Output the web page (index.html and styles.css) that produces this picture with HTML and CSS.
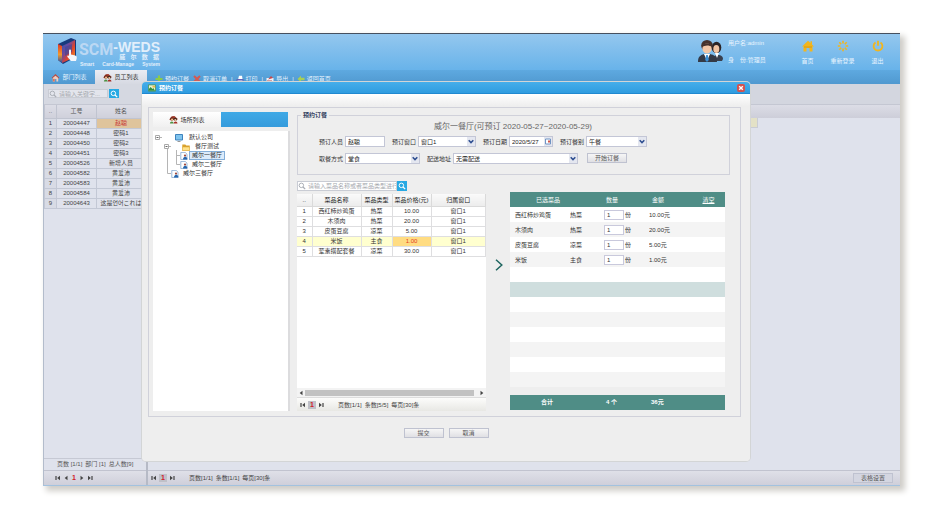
FILE: index.html
```html
<!DOCTYPE html>
<html lang="zh-CN">
<head>
<meta charset="utf-8">
<title>SCM-WEDS</title>
<link rel="stylesheet" href="styles.css">
</head>
<body>
<svg class="defs" aria-hidden="true">
  <defs>
    <symbol id="search" viewBox="0 0 10 10"><circle cx="4.2" cy="4.2" r="2.8" fill="none" stroke="currentColor" stroke-width="1.2"/><path d="M6.3 6.3L9 9" stroke="currentColor" stroke-width="1.5"/></symbol>
    <symbol id="house" viewBox="0 0 10 10"><path d="M.8 5.2L5 1.2l4.2 4-1 .8L5 3 1.8 6z" fill="#c04a3c"/><path d="M2 5.6L5 3l3 2.6V9.4H6V6.6H4.2v2.8H2z" fill="#f2cdbd"/><path d="M2 6.5h2.2v2.9H2z" fill="#d8765f"/></symbol>
    <symbol id="people" viewBox="0 0 10 10"><path d="M.2 5.2L3 1.4 6 1l3.8 3.4-.8 1z" fill="#a03c2c"/><circle cx="3.2" cy="4.4" r="2" fill="#6b2418"/><circle cx="3.4" cy="5.2" r="1.2" fill="#f0c08c"/><circle cx="7" cy="4.8" r="1.8" fill="#3c2a22"/><circle cx="7" cy="5.6" r="1.1" fill="#f2c89a"/><path d="M1 9.4c0-3 4.2-3 4.2 0z" fill="#4d9143"/><path d="M5.2 9.4c0-3 4.2-3 4.2 0z" fill="#a53026"/></symbol>
    <symbol id="page" viewBox="0 0 8 8"><path d="M.8.4h4.400L7 2.200v5.400H.8z" fill="#fff" stroke="#6f9ac8" stroke-width=".7"/><circle cx="5" cy="3.600" r="1.100" fill="#a34a3c"/><path d="M3 7.400c0-3.400 4.400-3.400 4.400 0z" fill="#2465ad"/></symbol>
    <symbol id="first" viewBox="0 0 8 8"><path d="M2 2v4" stroke="#444" stroke-width="1.200"/><path d="M6 1.800v4.400L3.200 4z" fill="#444"/></symbol>
    <symbol id="last" viewBox="0 0 8 8"><path d="M6 2v4" stroke="#444" stroke-width="1.200"/><path d="M2 1.800v4.400L4.800 4z" fill="#444"/></symbol>
    <symbol id="prev" viewBox="0 0 8 8"><path d="M5.500 1.800v4.400L2.700 4z" fill="#444"/></symbol>
    <symbol id="next" viewBox="0 0 8 8"><path d="M2.500 1.800v4.400L5.300 4z" fill="#444"/></symbol>
    <symbol id="drop" viewBox="0 0 8 8"><path d="M1.700 2.700L4 5l2.300-2.300" fill="none" stroke="#2f4f91" stroke-width="1.600"/></symbol>
  </defs>
</svg>
<div class="window">
  <header class="topbar">
    <div class="brand">
      <svg class="cube" viewBox="0 0 22 28">
        <defs>
          <linearGradient id="cubeFace" x1="0" y1="0" x2="1" y2="1"><stop offset="0" stop-color="#2a55b5"/><stop offset=".35" stop-color="#6b4a9e"/><stop offset=".6" stop-color="#e0432b"/><stop offset="1" stop-color="#f5b52e"/></linearGradient>
          <linearGradient id="cubeSide" x1="0" y1="0" x2="0" y2="1"><stop offset="0" stop-color="#dd3527"/><stop offset=".55" stop-color="#f39a2b"/><stop offset="1" stop-color="#274da8"/></linearGradient>
        </defs>
        <path d="M1 7L14 1l5 2v17L6 27l-5-4z" fill="#173a7c"/>
        <path d="M1 7l4 2v17l-4-3z" fill="url(#cubeSide)"/>
        <path d="M5 9l13-6v17L5 26z" fill="url(#cubeFace)"/>
        <path d="M8 10l7-3v8l-7 4z" fill="#3346a0" opacity=".6"/>
        <path d="M12 13.500c0-1.500 2-1.500 2 0v4l4.200 1c1.600.4 1.800 1.600 1.500 3L19 24h-5l-3.500-4c-.7-1.200.5-1.900 1.500-1z" fill="#f4f6fb"/>
      </svg>
      <div class="wordmark">
        <span class="scm">SCM</span>
        <span class="weds-block"><span class="weds">-WEDS</span><span class="cn"><i>威</i><i>尔</i><i>数</i><i>据</i></span></span>
        <span class="tagline"><i>Smart</i><i>Card-Manage</i><i>System</i></span>
      </div>
    </div>
    <div class="user">
      <svg class="avatar" viewBox="0 0 26 24">
        <path d="M14 21c0-6 11-7 11-1l-1 2H14z" fill="#39404e"/><ellipse cx="18.500" cy="8.500" rx="4.800" ry="5.800" fill="#2b2426"/><ellipse cx="18.300" cy="10" rx="3" ry="4" fill="#f0c3a2"/><path d="M17 14h4l-2 5z" fill="#fff"/>
        <ellipse cx="9" cy="6.500" rx="5.800" ry="5.600" fill="#46332d"/><ellipse cx="9" cy="9.400" rx="4.600" ry="5.200" fill="#f3c8a8"/><path d="M3.800 8c0-5 10.400-5 10.400 0-3-2-7-2-10.400 0z" fill="#46332d"/>
        <path d="M0 23c0-6 3-7 6-8l3 4 3-4c4 1 7 2 7 8z" fill="#343a47"/><path d="M6 15h6l-3 7z" fill="#fff"/><path d="M8.200 16h1.600l1 5-1.800 2-1.800-2z" fill="#3a8fd6"/>
      </svg>
      <div class="who"><span>用户名:admin</span><span>身&emsp;份:管理员</span></div>
      <nav class="quick">
        <a href="#"><svg viewBox="0 0 12 12"><path d="M0 6.500L6 .8l2.500 2.300V1.300H10v3.200l2 2H10.500V11.500H7.500V8h-3v3.500h-3v-5z" fill="#f2b51d"/><path d="M2 7h8" stroke="#cf9415" stroke-width=".8"/></svg>首页</a>
        <a href="#"><svg viewBox="0 0 12 12"><path d="M6 .8v2.600M6 8.600v2.600M.8 6h2.600M8.600 6h2.600M2.300 2.300l1.900 1.900M7.800 7.800l1.900 1.900M2.300 9.700l1.900-1.900M7.800 4.200l1.900-1.900" stroke="#f2b51d" stroke-width="1.600"/></svg>重新登录</a>
        <a href="#"><svg viewBox="0 0 12 12"><path d="M3.500 2.500a4.400 4.400 0 1 0 5 0M6 .8v5" stroke="#f2b51d" stroke-width="1.800" fill="none"/></svg>退出</a>
      </nav>
    </div>
  </header>
  <div class="navbar">
    <button class="tab" type="button"><svg><use href="#house"/></svg>部门列表</button>
    <button class="tab active" type="button"><svg><use href="#people"/></svg>员工列表</button>
    <div class="tools">
      <a href="#"><svg viewBox="0 0 8 8"><path d="M4 .5v7M.5 4h7" stroke="#8ccb48" stroke-width="2.200"/></svg>预约订餐</a>
      <a href="#"><svg viewBox="0 0 8 8"><path d="M1 1l6 6M7 1L1 7" stroke="#d8584f" stroke-width="2"/></svg>取消订单</a><span>|</span>
      <a href="#"><svg viewBox="0 0 8 8"><path d="M2.200 4L3 .8h3L6.500 4z" fill="#fff"/><path d="M.5 4h7v3h-7z" fill="#5f65b8"/><path d="M1.500 5.500h5v2h-5z" fill="#e8ebfa"/></svg>打印</a><span>|</span>
      <a href="#"><svg viewBox="0 0 8 8"><path d="M.5 3h7v4.500h-7z" fill="#f2f2f6"/><path d="M2 4.500L5 1l2 2z" fill="#c9474a"/><path d="M1 6h5" stroke="#b04a50"/></svg>导出</a><span>|</span>
      <a href="#"><svg viewBox="0 0 8 8"><path d="M.5 4L4 .8v2h3.500v2.400H4v2z" fill="#a9cf54"/></svg>返回首页</a>
    </div>
  </div>
  <main class="main">
    <aside class="sidebar">
      <form class="search side-search"><svg class="lens"><use href="#search"/></svg><input type="text" placeholder="请输入关键字..." aria-label="关键字"><button type="button" aria-label="搜索"><svg><use href="#search"/></svg></button></form>
      <table class="staff">
        <thead><tr><th class="no">..</th><th class="id">工号</th><th>姓名</th></tr></thead>
        <tbody>
          <tr><td>1</td><td>20004447</td><td class="picked">赵聪</td></tr>
          <tr><td>2</td><td>20004448</td><td>密码1</td></tr>
          <tr><td>3</td><td>20004450</td><td>密码2</td></tr>
          <tr><td>4</td><td>20004451</td><td>密码3</td></tr>
          <tr><td>5</td><td>20004526</td><td>新增人员</td></tr>
          <tr><td>6</td><td>20004582</td><td>黄爱沛</td></tr>
          <tr><td>7</td><td>20004583</td><td>黄爱沛</td></tr>
          <tr><td>8</td><td>20004584</td><td>黄爱沛</td></tr>
          <tr><td>9</td><td>20004643</td><td>这是언어これは</td></tr>
        </tbody>
      </table>
      <div class="summary">页数 [1/1]&ensp;部门 [1]&ensp;总人数[9]</div>
      <div class="pager"><svg><use href="#first"/></svg><svg><use href="#prev"/></svg><b>1</b><svg><use href="#next"/></svg><svg><use href="#last"/></svg></div>
    </aside>
    <section class="content">
      <div class="content-tools"></div>
      <div class="content-head"></div>
      <div class="content-row"></div>
      <div class="pager content-pager"><svg><use href="#first"/></svg><b class="current">1</b><svg><use href="#last"/></svg><span>页数[1/1]&ensp;条数[1/1]&ensp;每页[30]条</span><button type="button" class="btn">表格设置</button></div>
    </section>
  </main>

  <div class="dialog" role="dialog" aria-labelledby="dialog-title">
    <div class="dialog-title">
      <svg viewBox="0 0 9 8"><path d="M.5.500h8v7h-8z" fill="#e7f2d2" stroke="#3b8a3d" stroke-width=".8"/><path d="M1 5l2-2 2 2 1-1 2 3H1z" fill="#2f8f3d"/><path d="M5 1.500h3v2H5z" fill="#e7b94c"/></svg>
      <span id="dialog-title">预约订餐</span>
      <button type="button" class="close" aria-label="关闭"><svg viewBox="0 0 8 8"><path d="M2.200 2.200l3.600 3.600M5.800 2.200L2.200 5.800" stroke="#fff" stroke-width="1.400"/></svg></button>
    </div>
    <div class="dialog-body">
      <div class="panel">
        <div class="places">
          <div class="place-tabs"><button type="button" class="place-tab"><svg><use href="#people"/></svg>场所列表</button></div>
          <div class="tree">
            <svg class="lines" viewBox="0 0 40 46"><path d="M7 6.500h2M16 15.500h2M14.500 18v24.500H18M23.500 19v14.500H27M23.500 24.500H27" stroke="#b5b5b5" fill="none"/><path d="M2.500 4.500h4v4h-4zM11.500 13.500h4v4h-4z" stroke="#aaa" fill="#fff"/><path d="M3.500 6.500h2M12.500 15.500h2" stroke="#666"/></svg>
            <div class="node d0"><svg viewBox="0 0 8 8"><path d="M.500.500h7v5.500h-7z" fill="#7fc4ee" stroke="#3f83bd"/><path d="M2.500 7.500h3" stroke="#999"/></svg><span>默认公司</span></div>
            <div class="node d1"><svg viewBox="0 0 8 8"><path d="M.300 1.500h3l1 1h3.400v5H.300z" fill="#d9a22e"/><path d="M.300 4h7.400v3.500H.300z" fill="#ffe28a" stroke="#d9a22e" stroke-width=".5"/></svg><span>餐厅测试</span></div>
            <div class="node d2"><svg><use href="#page"/></svg><span class="selected">威尔一餐厅</span></div>
            <div class="node d2"><svg><use href="#page"/></svg><span>威尔二餐厅</span></div>
            <div class="node d3"><svg><use href="#page"/></svg><span>威尔三餐厅</span></div>
          </div>
        </div>
        <div class="booking">
          <fieldset>
            <legend>预约订餐</legend>
            <div class="window-title">威尔一餐厅(可预订 2020-05-27~2020-05-29)</div>
            <div class="fields">
              <div class="field w40"><label for="person">预订人员</label><input id="person" type="text" value="赵聪"></div>
              <div class="field w58"><label for="win">预订窗口</label><span class="pick"><select id="win"><option>窗口1</option></select><svg><use href="#drop"/></svg></span></div>
              <div class="field w44"><label for="date">预订日期</label><span class="pick"><input id="date" type="text" value="2020/5/27"><svg viewBox="0 0 8 8"><path d="M1.500 1.500h5v5h-5z" fill="#fff" stroke="#7094c4"/><path d="M4 3h2v2H4z" fill="#d0564a"/></svg></span></div>
              <div class="field w61"><label for="meal">预订餐别</label><span class="pick"><select id="meal"><option>午餐</option></select><svg><use href="#drop"/></svg></span></div>
            </div>
            <div class="fields">
              <div class="field w75"><label for="way">取餐方式</label><span class="pick"><select id="way"><option>堂食</option></select><svg><use href="#drop"/></svg></span></div>
              <div class="field w125"><label for="addr">配送地址</label><span class="pick"><select id="addr"><option>无需配送</option></select><svg><use href="#drop"/></svg></span></div>
              <button type="button" class="btn">开始订餐</button>
            </div>
          </fieldset>
          <div class="pickers">
            <div class="menu">
              <form class="search"><svg class="lens"><use href="#search"/></svg><input type="text" placeholder="请输入菜品名称或者菜品类型进行" aria-label="菜品"><button type="button" aria-label="搜索"><svg><use href="#search"/></svg></button></form>
              <div class="menu-list">
                <table>
                  <thead><tr><th class="c1">..</th><th class="c2">菜品名称</th><th class="c3">菜品类型</th><th class="c4">菜品价格(元)</th><th>归属窗口</th></tr></thead>
                  <tbody>
                    <tr><td>1</td><td>西红柿炒鸡蛋</td><td>热菜</td><td>10.00</td><td>窗口1</td></tr>
                    <tr><td>2</td><td>木须肉</td><td>热菜</td><td>20.00</td><td>窗口1</td></tr>
                    <tr><td>3</td><td>皮蛋豆腐</td><td>凉菜</td><td>5.00</td><td>窗口1</td></tr>
                    <tr class="hot"><td>4</td><td>米饭</td><td>主食</td><td class="price">1.00</td><td>窗口1</td></tr>
                    <tr><td>5</td><td>荤素搭配套餐</td><td>凉菜</td><td>30.00</td><td>窗口1</td></tr>
                  </tbody>
                </table>
              </div>
              <div class="scrollbar"><svg><use href="#prev"/></svg><span></span><svg><use href="#next"/></svg></div>
              <div class="pager menu-pager"><svg><use href="#first"/></svg><b class="current">1</b><svg><use href="#last"/></svg><span>页数[1/1]&ensp;条数[5/5]&ensp;每页[30]条</span></div>
            </div>
            <svg class="move" viewBox="0 0 8 12"><path d="M1 .8L6.800 6 1 11.200" fill="none" stroke="#1f6660" stroke-width="1.500"/></svg>
            <div class="order">
              <table>
                <colgroup><col class="o1"><col class="o2"><col class="o3"><col class="o4"><col class="o5"></colgroup>
                <thead><tr><th class="dish" colspan="2">已选菜品</th><th class="qty">数量</th><th class="sum">金额</th><th><a class="clear" href="#">清空</a></th></tr></thead>
                <tbody>
                  <tr><td class="name">西红柿炒鸡蛋</td><td>热菜</td><td><label><input type="text" value="1">份</label></td><td>10.00元</td><td></td></tr>
                  <tr><td class="name">木须肉</td><td>热菜</td><td><label><input type="text" value="1">份</label></td><td>20.00元</td><td></td></tr>
                  <tr><td class="name">皮蛋豆腐</td><td>凉菜</td><td><label><input type="text" value="1">份</label></td><td>5.00元</td><td></td></tr>
                  <tr><td class="name">米饭</td><td>主食</td><td><label><input type="text" value="1">份</label></td><td>1.00元</td><td></td></tr>
                  <tr><td colspan="5"></td></tr>
                  <tr class="hover"><td colspan="5"></td></tr>
                  <tr><td colspan="5"></td></tr>
                  <tr><td colspan="5"></td></tr>
                  <tr><td colspan="5"></td></tr>
                  <tr><td colspan="5"></td></tr>
                  <tr><td colspan="5"></td></tr>
                  <tr><td colspan="5"></td></tr>
                </tbody>
              </table>
              <div class="total"><span>合计</span><span>4 个</span><span>36元</span></div>
            </div>
          </div>
        </div>
      </div>
      <div class="actions"><button type="button" class="btn">提交</button><button type="button" class="btn">取消</button></div>
    </div>
  </div>
</div>
</body>
</html>
```
FILE: styles.css
```css
* { box-sizing: border-box; }
body {
  margin: 0;
  min-height: 100vh;
  padding: 33px 45px 31px 43px;
  display: flex;
  background: #fff;
  color: #333;
  font: 6px/8px "Liberation Sans", "Noto Sans CJK SC", "Noto Sans CJK KR", sans-serif;
}
svg { display: block; flex: none; width: 8px; height: 8px; }
.defs { position: absolute; width: 0; height: 0; }
a { color: inherit; text-decoration: none; }
i { font-style: normal; }
input, select, button { font: inherit; color: inherit; margin: 0; padding: 0; border-radius: 0; }
button { border: 0; background: none; }
table { border-collapse: collapse; table-layout: fixed; width: 100%; }
th, td { padding: 0; font-weight: normal; text-align: center; white-space: nowrap; overflow: hidden; }

.window {
  position: relative;
  flex: 1;
  display: flex;
  flex-direction: column;
  border-top: 1px solid #46505e;
  border-bottom: 1px solid #a3c2df;
  box-shadow: 4px 4px 6px 1px #cfcdc8;
  background: #dfe2ec;
}

/* Header */
.topbar {
  height: 36px;
  display: flex;
  justify-content: space-between;
  background: linear-gradient(#94c7ee, #68b3ea);
  color: #eaf5ff;
}
.brand { display: flex; padding: 3px 0 0 14px; }
.cube { width: 22px; height: 28px; }
.wordmark { display: grid; grid-template-columns: auto auto; grid-template-rows: 20px 6px; align-content: start; color: #e2effb; padding-top: 4px; }
.scm { font: bold 16px/18px Roboto, "Liberation Sans", sans-serif; color: #bcd8f3; }
.weds-block { display: flex; flex-direction: column; }
.weds { font-weight: bold; font-size: 14px; line-height: 13px; }
.cn { display: flex; justify-content: space-between; padding: 0 1px 0 6px; font-size: 6px; font-weight: bold; line-height: 7px; }
.tagline { grid-column: 1 / 3; display: flex; justify-content: space-between; font-size: 5px; font-weight: bold; line-height: 6px; padding-left: 1px; }
.user { display: flex; }
.avatar { width: 26px; height: 24px; margin-top: 5px; }
.who { display: flex; flex-direction: column; gap: 9px; padding: 5px 0 0 4px; width: 66px; white-space: nowrap; }
.quick { display: flex; padding: 6px 5px 0 0; }
.quick a { width: 35px; display: flex; flex-direction: column; align-items: center; gap: 5px; }
.quick svg { width: 12px; height: 12px; }

/* Tabs and tools */
.navbar { height: 14px; display: flex; background: linear-gradient(#5ea9e0, #5099d0); color: #e4f2fd; }
.tab { width: 52px; display: flex; align-items: center; justify-content: center; gap: 2px; }
.tab svg { width: 9px; height: 9px; }
.tab.active { background: linear-gradient(#eaecf3, #d6d9e2); color: #333; }
.tools { display: flex; gap: 3px; padding: 5px 0 0 8px; }
.tools a { display: flex; gap: 2px; margin-right: 1px; }

/* Main area */
.main { flex: 1; display: flex; }
.sidebar { width: 105px; display: flex; flex-direction: column; border-left: 1px solid #b3bccb; border-right: 2px solid #b6bac6; }
.search { display: flex; position: relative; height: 10px; }
.search .lens { position: absolute; left: 1px; top: 1px; color: #a9adb5; }
.search input { width: 100px; border: 1px solid #c9ccd4; background: #fff; padding: 0 0 0 10px; outline: 0; }
.search input::placeholder { color: #a5a8ae; opacity: 1; }
.search button { width: 10px; background: #27a9e3; color: #fff; display: grid; place-items: center; }
.side-search { height: 21px; padding: 5px 0 6px 4px; background: #d5d8e1; border-bottom: 1px solid #c4c7d2; }
.side-search .lens { left: 5px; top: 6px; }
.side-search input { width: 60px; background: #e3e5ec; }
.side-search button { margin-left: 1px; }
.staff { margin-bottom: auto; }
.staff th { height: 13px; background: linear-gradient(#dcdde6, #cfd0db); border: 1px solid #c0c4d0; border-top: 0; color: #555; }
.staff td { height: 10px; border: 1px solid #c3c8d5; line-height: 8px; color: #444; }
.staff td:first-child { background: #d8dbe5; }
.staff .no { width: 12px; }
.staff .id { width: 40px; }
.staff .picked { background: #dfc49c; color: #c7373a; }
.summary { height: 12px; padding: 1px 0 0 13px; border-top: 1px solid #c6c9d4; white-space: nowrap; color: #555; }
.pager { height: 15px; display: flex; align-items: center; padding-left: 10px; background: linear-gradient(#dfe0e8, #cfcfda); border-top: 1px solid #c1c3cf; color: #444; }
.pager b { width: 8px; text-align: center; color: #d11a28; font-size: 7px; }
.pager .current { background: #bfc0c8; }
.pager span { margin-left: 12px; white-space: nowrap; }
.content { flex: 1; display: flex; flex-direction: column; }
.content-tools { height: 21px; background: #d3d6df; border-bottom: 1px solid #c4c7d2; }
.content-head { height: 13px; background: linear-gradient(#dcdde6, #cdced9); }
.content-row { height: 10px; width: 610px; background: #e3e1c6; border: 1px solid #c9ccd4; border-width: 0 1px 1px 0; margin-bottom: auto; }
.content-pager { padding: 0 7px 0 2px; gap: 1px; }
.content-pager .btn { margin-left: auto; background: #d4d6e1; }
.btn { width: 40px; height: 10px; line-height: 8px; border: 1px solid #bfc2d0; background: linear-gradient(#f6f6f6, #e0e0e4); color: #555; text-align: center; }

/* Dialog */
.dialog {
  position: absolute;
  inset: 48px 150px 24px 99px;
  display: flex;
  flex-direction: column;
  border-radius: 4px;
  background: #eee;
  box-shadow: 0 0 0 1px #d3d5d6;
}
.dialog-title { height: 12px; display: flex; align-items: center; gap: 3px; padding: 0 5px 0 6px; border-radius: 4px 4px 0 0; background: linear-gradient(#46aeea, #2f9ce0); border-bottom: 1px solid #2089d0; color: #fff; font-weight: bold; }
.close { margin-left: auto; width: 8px; height: 8px; border-radius: 2px; background: #d4524e; }
.dialog-body { flex: 1; display: flex; flex-direction: column; padding: 13px 9px 23px 6px; background: linear-gradient(#fff, #eee 12px); border-radius: 0 0 4px 4px; }
.panel { flex: 1; display: flex; gap: 7px; padding: 4px 10px 5px 4px; border: 1px solid #d0d1da; }
.places { width: 137px; display: flex; flex-direction: column; gap: 4px; }
.place-tabs { height: 15px; margin-right: 2px; background: linear-gradient(#3fa9e6, #359bdc); }
.place-tab { width: 68px; height: 15px; display: flex; align-items: center; justify-content: center; gap: 2px; background: linear-gradient(#fff, #f0f0f0); }
.place-tab svg { width: 9px; height: 9px; }
.tree { position: relative; flex: 1; padding-top: 2px; background: #fff; border-right: 2px solid #dcdcde; }
.lines { position: absolute; left: 0; top: 0; width: 40px; height: 46px; }
.node { display: flex; align-items: center; height: 9px; position: relative; }
.node span { padding: 0 2px; border: 1px solid transparent; line-height: 7px; }
.node .selected { background: #dcebfa; border-color: #84aed8; }
.d0 { padding-left: 22px; gap: 3px; }
.d1 { padding-left: 29px; gap: 2px; }
.d2 { padding-left: 27px; gap: 1px; }
.d3 { padding-left: 18px; gap: 1px; }
.booking { flex: 1; display: flex; flex-direction: column; }
fieldset { margin: 0; padding: 0 0 10px 21px; border: 1px solid #d0d1da; min-width: 0; }
legend { margin-left: -18px; padding: 0 2px; line-height: 6px; font-weight: bold; color: #33415e; }
.window-title { margin: 3px 22px 3px 0; font-size: 8px; line-height: 12px; text-align: center; color: #666; }
.fields { display: flex; gap: 7px; height: 11px; }
.fields + .fields { margin-top: 6px; }
.field { display: flex; gap: 2px; align-items: center; }
.field label { width: 24px; white-space: nowrap; }
.field input, .field select { appearance: none; width: 100%; height: 11px; padding: 0 2px; border: 1px solid #c3c6d6; background: #fff; color: #222; }
.pick { position: relative; display: block; }
.pick svg { position: absolute; right: 1px; top: 1px; width: 8px; height: 9px; background: #e4e7f0; pointer-events: none; }
.w40 > input { width: 40px; }
.w58 .pick { width: 58px; }
.w44 .pick { width: 44px; }
.w61 .pick { width: 61px; }
.w75 .pick { width: 75px; }
.w125 .pick { width: 125px; }
.fields .btn { margin-left: 2px; }

.pickers { flex: 1; display: flex; margin: 6px 5px 0 0; }
.menu { flex: 189; display: flex; flex-direction: column; }
.menu-list { flex: 1; margin-top: 3px; background: #fff; }
.menu-list th { height: 12px; background: linear-gradient(#fafafa, #ececec); border: 1px solid #dadada; border-width: 0 1px 1px 0; color: #222; }
.menu-list td { height: 10px; border: 1px solid #dedee0; border-width: 0 1px 1px 0; line-height: 8px; }
.menu-list .c1 { width: 15px; }
.menu-list .c2 { width: 49px; }
.menu-list .c3 { width: 31px; }
.menu-list .c4 { width: 39px; }
.hot td { background: #ffffcf; }
.hot .price { background: #ffdc82; color: #e33c1e; }
.scrollbar { height: 9px; display: flex; align-items: center; background: #f3f3f3; }
.scrollbar span { flex: 1; height: 6px; margin-right: 4px; background: #c2c2c2; }
.menu-pager { height: 14px; padding-left: 2px; gap: 1px; background: linear-gradient(#fcfcfb, #e8e8e4); border-color: #ddd; }
.move { width: 8px; height: 12px; margin: 78px 7px 0 9px; }
.order { flex: 215; display: flex; flex-direction: column; justify-content: space-between; padding: 11px 0 1px; }
.order thead { background: #4f8d86; color: #fff; }
.order th { height: 15px; }
.order td { height: 15px; text-align: left; }
.order tbody tr { background: #fff; }
.order tbody tr:nth-child(even) { background: #f4f4f4; }
.order tbody tr.hover { background: #cfdede; }
.order .name { padding-left: 5px; }
.o1 { width: 60px; }
.o2 { width: 34px; }
.o3 { width: 45px; }
.o5 { width: 33px; }
.order .dish { padding-right: 18px; }
.order .qty { padding-right: 29px; }
.order .sum { padding-right: 25px; }
.clear { text-decoration: underline; }
.order label { display: flex; align-items: center; gap: 1px; }
.order input { width: 20px; height: 10px; border: 1px solid #c9c9dc; background: #fff; padding: 0 2px; }
.total { display: flex; height: 15px; line-height: 15px; background: #4f8d86; color: #fff; font-weight: bold; padding-left: 31px; }
.total span { width: 65px; }
.total span + span { width: 45px; }
.actions { display: flex; justify-content: center; gap: 5px; margin-top: 11px; padding-left: 3px; }
```
